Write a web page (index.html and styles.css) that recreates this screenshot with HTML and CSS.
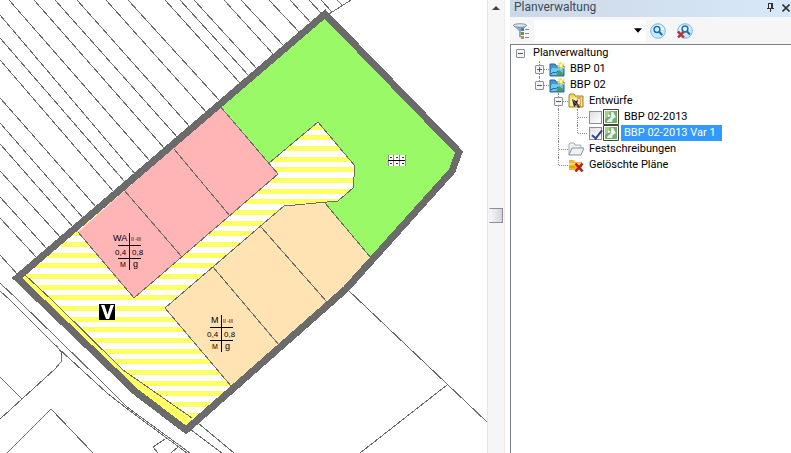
FILE: index.html
```html
<!DOCTYPE html>
<html lang="de">
<head>
<meta charset="utf-8">
<title>Planverwaltung</title>
<link rel="stylesheet" href="styles.css">
</head>
<body>
<main class="app">
  <section class="map" aria-label="Bebauungsplan">
    <svg class="map-canvas" viewBox="0 0 487 453" preserveAspectRatio="xMinYMin slice">
      <defs>
        <pattern id="road" width="32" height="32" y="18" patternUnits="userSpaceOnUse">
          <rect width="32" height="32" fill="#fff"/>
          <path d="M0 0h32v5H0zM0 11h32v5H0zM0 21h32v5H0z" fill="#ffff66"/>
        </pattern>
        <g id="grid-cross">
          <path class="cross" d="M16 0V37M5 12H28M5 25H28"/>
        </g>
      </defs>
      <g class="parcel">
        <path d="M128 0L220 101M106 0L207 113M77 0L190 127M55 0L178 138M34 0L165 149M9 0L150 161M0 15L136 175M0 38L125 182M0 60L114 192M0 98L97 208M0 123L84 219M0 144L74 228M0 171L62 239M0 197L48 250M0 218L38 259M0 255L19 276"/>
        <path d="M165 0L240 83M180 0L249 76M194 0L258 70M224 0L274 55M241 0L284 46M269 0L300 33M290 0L312 24M309 0L322 14M321 0L332 12M337 0L343 6M351 0L329 14"/>
        <path d="M0 283L18 300L100 380L127 407L190 453M0 291L10 300L58 348L107 393L130 411L187 453M56 345L61 352L61 362L55 369L0 419M0 377L22 399M7 453L51 409L93 453M158 453L153 447L165 439M171 453L178 447"/>
        <path d="M192 418L234 453M190 429L222 453M347 289L487 422M447 385L360 453"/>
      </g>
      <path fill="url(#road)" d="M17 278L325 14L459 152L452 171L372 260L346 289L186 430L136 392Z"/>
      <path fill="#ffff66" d="M17 278L25 273L52 300L123 370L192 418L186 430L136 392Z"/>
      <path fill="#99f966" d="M220 105L325 14L459 152L452 171L372 260L325 203L338 201L353 188L355 166L318 122L269 163Z"/>
      <path fill="#ffb5b5" d="M78 232L220 106L278 174L134 298Z"/>
      <path fill="#ffe3b3" d="M284 206L325 203L371 258L346 289L231 386L165 308Z"/>
      <g class="parcel">
        <path d="M25 275L52 300L123 370L192 418"/>
        <path d="M78 232L134 298L278 174L220 106M124 190L182 257M174 149L230 216"/>
        <path d="M371 258L325 203M231 386L165 308L284 206L338 201L353 188L355 166L318 122L269 163M261 227L327 302M213 267L279 345"/>
      </g>
      <path class="boundary" d="M17 278L325 14L459 152L452 171L372 260L346 289L186 430L136 392Z"/>
      <g transform="translate(113 233)">
        <use href="#grid-cross"/>
        <text class="use-text" x="0" y="8">WA</text><text class="floors" x="18" y="8">II -III</text>
        <text class="ratio" x="2" y="22">0,4</text><text class="ratio" x="19" y="22">0,8</text>
        <text class="small" x="7" y="34">M</text><text class="mode" x="20" y="34">g</text>
      </g>
      <g transform="translate(205 315)">
        <use href="#grid-cross"/>
        <text class="use-text" x="6" y="8">M</text><text class="floors" x="18" y="8">II -III</text>
        <text class="ratio" x="2" y="22">0,4</text><text class="ratio" x="19" y="22">0,8</text>
        <text class="small" x="7" y="34">M</text><text class="mode" x="20" y="34">g</text>
      </g>
      <path d="M99 304h16v16H99z"/>
      <path fill="#fff" d="M101 305h3.500l3 9.500 3-9.500h3.500l-5 14h-3z"/>
      <g shape-rendering="crispEdges">
        <path fill="#fff" d="M388 155h18v11h-18z"/>
        <path fill="#8a8a8a" d="M393 155h1v11h-1zM399 155h1v11h-1zM388 155h1v11h-1zM405 155h1v11h-1z"/>
        <path d="M388 160h17v1h-17z"/>
        <path fill="#333" d="M390 157h2v1h-2zM396 157h2v1h-2zM402 157h2v1h-2zM390 163h2v1h-2zM396 163h2v1h-2zM402 163h2v1h-2z"/>
      </g>
    </svg>
  </section>

  <div class="scrollbar" aria-hidden="true">
    <svg class="scroll-up" viewBox="0 0 8 4"><path d="M0 4L4 0L8 4z" fill="#444"/></svg>
    <div class="scroll-thumb"></div>
  </div>

  <aside class="panel">
    <header class="panel-head">
      <h1 class="panel-title">Planverwaltung</h1>
      <button class="head-btn" type="button" aria-label="Anheften">
        <svg width="7" height="9" viewBox="0 0 7 9"><path d="M1 .5h5M1.500 0v5M4.500 0v5M5.500 0v5M0 5.500h7M3.500 6v3" stroke="#333" fill="none" shape-rendering="crispEdges"/></svg>
      </button>
      <button class="head-btn" type="button" aria-label="Schließen">
        <svg width="8" height="8" viewBox="0 0 8 8"><path d="M.5 .5l7 7M7.500 .5l-7 7" stroke="#333" stroke-width="1.600"/></svg>
      </button>
    </header>
    <div class="toolbar">
      <button class="tool" type="button" aria-label="Filter">
        <svg width="16" height="16" viewBox="0 0 16 16">
          <path d="M0 2L6 8v6l3 1V8l5-6z" fill="#91a7bb"/><ellipse cx="7" cy="2.500" rx="6.500" ry="1.800" fill="#dce6ee" stroke="#7890a5"/>
          <path d="M8 5h8v11H8z" fill="#f6f6f6"/>
          <path d="M8 5h3v3H8z" fill="#3f80bd"/><path d="M8 9h3v3H8z" fill="#5c9a3c"/><path d="M8 13h3v3H8z" fill="#d28b20"/>
          <path d="M12 6.500h4M12 10.500h4M12 14.500h4" stroke="#7d8c9a"/>
        </svg>
      </button>
      <span class="combo">
        <select class="combo-box" aria-label="Suchbegriff"><option></option></select>
        <svg class="combo-arrow" viewBox="0 0 7 4"><path d="M0 0h7L3.500 4z"/></svg>
      </span>
      <button class="tool tool-search" type="button" aria-label="Suchen">
        <svg width="16" height="16" viewBox="0 0 16 16">
          <circle cx="8" cy="8" r="7.300" fill="#c9e9fa" stroke="#79bbdf"/><path d="M2 7a6 5 0 0 1 12 0z" fill="#eef9ff"/>
          <circle cx="7" cy="6.500" r="2.900" fill="#e8f7ff" stroke="#1272b5" stroke-width="1.500"/><path d="M9 8.800l3.200 3.200" stroke="#1272b5" stroke-width="2"/>
        </svg>
      </button>
      <button class="tool tool-clear" type="button" aria-label="Suche löschen">
        <svg width="16" height="16" viewBox="0 0 16 16">
          <circle cx="8" cy="8" r="7.300" fill="#c9e9fa" stroke="#79bbdf"/><path d="M2 7a6 5 0 0 1 12 0z" fill="#eef9ff"/>
          <circle cx="8" cy="6" r="2.900" fill="#e8f7ff" stroke="#1272b5" stroke-width="1.500"/><path d="M10 8.500l3 3" stroke="#1272b5" stroke-width="2"/>
          <path d="M1 8.500l6 6M7 8.500l-6 6" stroke="#b92d38" stroke-width="2.400"/>
        </svg>
      </button>
    </div>

    <svg class="symbols" aria-hidden="true">
      <symbol id="plan-folder" viewBox="0 0 16 16">
        <path d="M1 3h5l1 2h8v10H1z" fill="#3c98cd" stroke="#246b94"/><path d="M2 8c3-3 4 0 6-1s4-2 6 1v6H2z" fill="#72c8ee"/>
        <path d="M7 14l3-5 4 3v2z" fill="#4a9b61"/><path d="M2 13c3-3 5 0 7-3" stroke="#185e88" fill="none"/>
        <path d="M12 0l1 3 3-1-2 3 2 3-3-1-1 2-1-3-3 0 2-2-1-3 2 1z" fill="#f5dc57"/><circle cx="12" cy="4.500" r="1.300" fill="#fffbd0"/>
      </symbol>
      <symbol id="draft-folder" viewBox="0 0 16 16">
        <path d="M1 3l1-2h4l1 2h8v11H1z" fill="#f3dc62" stroke="#9d8421"/><path d="M2 5h12v8H2z" fill="#fbef9f"/>
        <path d="M9 4h4v9H9z" fill="#e9a16c"/><path d="M10 6h2v5h-2z" fill="#fbe3c7"/>
        <path d="M4 6l4 2 2-1-1 3 3 4-1 1-3-3-2 2z" fill="#222"/><path d="M4 6l6 7" stroke="#777"/>
      </symbol>
      <symbol id="open-folder" viewBox="0 0 16 16">
        <path d="M1 14V3l1-1h4l1 2h6v3" fill="#f1f1ee" stroke="#a8adb2"/><path d="M1 14L4 7h12l-3 7z" fill="#eef3f7" stroke="#87929c"/>
      </symbol>
      <symbol id="deleted-folder" viewBox="0 0 16 16">
        <path d="M1 3h5l1 2h7v8H1z" fill="#f4b52b"/><path d="M1 6h13v2H1z" fill="#ffd768"/><path d="M1 10h6" stroke="#d28d12"/>
        <path d="M7.500 6.500l7 8M14.500 6.500l-7 8" stroke="#b51f1f" stroke-width="2.600"/>
      </symbol>
      <symbol id="plan-sheet" viewBox="0 0 16 16">
        <path d="M.5 .5h15v15H.5z" fill="#fff" stroke="#444"/><path d="M2 2h12v12H2z" fill="#79ad61"/>
        <path d="M2 2h5l-1 5-4 3z" fill="#a5cf84"/><path d="M8 3c4-1 3 3 5 5l-3 2-1 3H4c0-3 4-3 4-6z" fill="#d9effa"/><path d="M5 5l3 2-3 1zM9 6l3 1-2 2z" fill="#fff"/>
      </symbol>
    </svg>

    <ul class="tree">
      <li class="row"><span class="cell"><button class="toggle" type="button" aria-label="Zuklappen"></button></span><span class="name root">Planverwaltung</span></li>
      <li class="row"><span class="cell"></span><span class="cell line tee"><button class="toggle closed" type="button" aria-label="Aufklappen"></button></span><svg class="icon"><use href="#plan-folder"/></svg><span class="name">BBP 01</span></li>
      <li class="row"><span class="cell"></span><span class="cell line elbow"><button class="toggle" type="button" aria-label="Zuklappen"></button></span><svg class="icon"><use href="#plan-folder"/></svg><span class="name">BBP 02</span></li>
      <li class="row"><span class="cell"></span><span class="cell"></span><span class="cell line tee"><button class="toggle" type="button" aria-label="Zuklappen"></button></span><svg class="icon"><use href="#draft-folder"/></svg><span class="name">Entwürfe</span></li>
      <li class="row"><span class="cell"></span><span class="cell"></span><span class="cell line"></span><span class="cell line tee"></span><input class="check" type="checkbox" id="plan-a"><svg class="icon"><use href="#plan-sheet"/></svg><label class="name" for="plan-a">BBP 02-2013</label></li>
      <li class="row"><span class="cell"></span><span class="cell"></span><span class="cell line"></span><span class="cell line elbow"></span><input class="check" type="checkbox" id="plan-b" checked><svg class="icon"><use href="#plan-sheet"/></svg><label class="name selected" for="plan-b">BBP 02-2013 Var 1</label></li>
      <li class="row"><span class="cell"></span><span class="cell"></span><span class="cell line tee"></span><svg class="icon"><use href="#open-folder"/></svg><span class="name">Festschreibungen</span></li>
      <li class="row"><span class="cell"></span><span class="cell"></span><span class="cell line elbow"></span><svg class="icon"><use href="#deleted-folder"/></svg><span class="name">Gelöschte Pläne</span></li>
    </ul>
  </aside>
</main>
</body>
</html>
```
FILE: styles.css
```css
* { box-sizing: border-box; }

body {
  margin: 0;
  background: #fff;
  color: #000;
  font-family: Roboto, "Liberation Sans", sans-serif;
  font-size: 11px;
}

button {
  padding: 0;
  border: 0;
  background: none;
}

.app {
  display: flex;
  height: 100vh;
}

/* Map */
.map {
  flex: 1;
  min-width: 0;
  overflow: hidden;
}

.map-canvas {
  display: block;
  width: 100%;
  height: 100%;
  font-family: "Liberation Sans", sans-serif;
}

.parcel {
  fill: none;
  stroke: #6b6b6b;
  stroke-width: 1;
  shape-rendering: crispEdges;
}

.boundary {
  fill: none;
  stroke: #6b6b6b;
  stroke-width: 7;
  shape-rendering: crispEdges;
}

.cross {
  stroke: #000;
  shape-rendering: crispEdges;
}

.use-text,
.mode { font-size: 9px; }
.ratio { font-size: 8px; }
.small { font-size: 7px; }
.floors { font-size: 5px; }

/* Scrollbar */
.scrollbar {
  flex: 0 0 18px;
  display: flex;
  flex-direction: column;
  align-items: center;
  margin-right: 5px;
  border-left: 1px solid #e6e6e6;
  border-right: 1px solid #ececec;
  background: #f6f6f6;
}

.scroll-up {
  width: 8px;
  height: 4px;
  margin-top: 6px;
}

.scroll-thumb {
  width: 14px;
  height: 15px;
  margin-top: 198px;
  border: 1px solid #8e8f96;
  border-left-color: #f0f0f0;
  background: linear-gradient(90deg, #f7f7f7, #d3d5dc);
}

/* Panel */
.panel {
  flex: 0 0 281px;
  display: flex;
  flex-direction: column;
  background: #f6f6f6;
}

.panel-head {
  display: flex;
  align-items: center;
  gap: 8px;
  height: 17px;
  padding: 0 1px 2px 4px;
  background: linear-gradient(90deg, #cbd8e6, #d8e8f8);
}

.panel-title {
  flex: 1;
  margin: 0;
  color: #3c4a58;
  font-size: 12px;
  font-weight: 400;
  line-height: 15px;
}

.head-btn { display: flex; }

.toolbar {
  display: flex;
  align-items: center;
  height: 27px;
  padding-left: 3px;
}

.tool {
  display: flex;
  width: 16px;
  height: 16px;
}

.tool-search { margin-left: 4px; }
.tool-clear { margin-left: 11px; }

.combo {
  position: relative;
  width: 112px;
  height: 21px;
  margin-left: 5px;
}

.combo-box {
  width: 100%;
  height: 100%;
  border: 0;
  border-radius: 0;
  background: #fff;
  appearance: none;
}

.combo-arrow {
  position: absolute;
  top: 8px;
  right: 4px;
  width: 8px;
  height: 5px;
  pointer-events: none;
}

/* Tree */
.symbols { display: none; }

.tree {
  flex: 1;
  margin: 0;
  padding: 0;
  border-top: 1px solid #7b8094;
  border-left: 1px solid #7b8094;
  background: #fff;
  list-style: none;
}

.row {
  display: flex;
  align-items: center;
  height: 16px;
}

.cell {
  position: relative;
  display: flex;
  align-items: center;
  justify-content: center;
  width: 19px;
  height: 16px;
}

.line::before {
  content: "";
  position: absolute;
  top: 0;
  bottom: 0;
  left: 9px;
  border-left: 1px dotted #8c8c8c;
}

.elbow::before { bottom: 8px; }

.tee::after,
.elbow::after {
  content: "";
  position: absolute;
  top: 8px;
  left: 10px;
  right: 0;
  border-top: 1px dotted #8c8c8c;
}

.toggle {
  position: relative;
  z-index: 1;
  width: 9px;
  height: 9px;
  border: 1px solid #8e8f8f;
  border-radius: 1px;
  background: linear-gradient(#3d5fa8, #3d5fa8) center / 5px 1px no-repeat, #f5f5f5;
}

.toggle.closed {
  background: linear-gradient(#3d5fa8, #3d5fa8) center / 5px 1px no-repeat, linear-gradient(#3d5fa8, #3d5fa8) center / 1px 5px no-repeat, #f5f5f5;
}

.icon {
  width: 16px;
  height: 16px;
}

.name {
  margin-left: 2px;
  padding: 0 3px;
  line-height: 16px;
  white-space: nowrap;
}

.root { margin-left: 0; }

.selected {
  padding-right: 6px;
  background: #3399ff;
  color: #fff;
}

.check {
  position: relative;
  width: 13px;
  height: 13px;
  margin: 0 1px 0 2px;
  border: 1px solid #8e8f8f;
  background: linear-gradient(135deg, #dcdfe3, #fff);
  appearance: none;
}

.check:checked::after {
  content: "";
  position: absolute;
  top: 0;
  left: 4px;
  width: 4px;
  height: 9px;
  border: solid #31479b;
  border-width: 0 2px 2px 0;
  transform: rotate(38deg);
}
```
